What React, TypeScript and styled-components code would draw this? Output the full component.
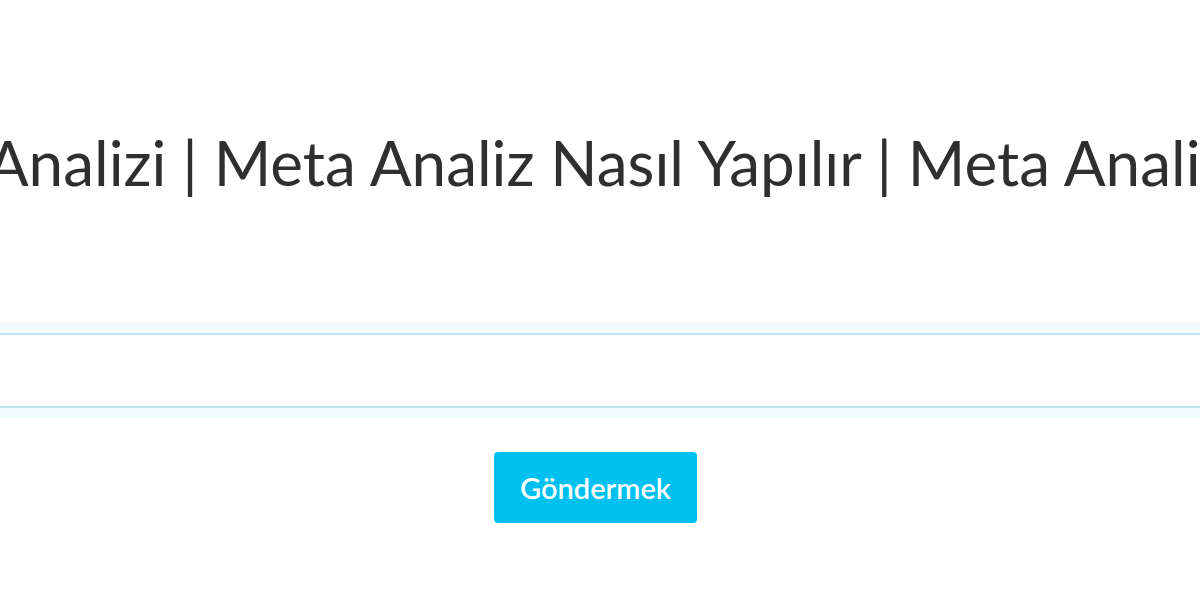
import React from "react";
import styled, { createGlobalStyle } from "styled-components";

const Global = createGlobalStyle`
  html, body { margin: 0; padding: 0; background: #ffffff; overflow: hidden; }
  body { font-family: "Lato", "Noto Sans", sans-serif; }
`;

const Page = styled.main`
  width: 1191px;
  height: 600px;
  display: flex;
  flex-direction: column;
  align-items: center;
  overflow: visible;
`;

const Title = styled.h1`
  margin: 0;
  padding-top: 114px;
  white-space: nowrap;
  font-family: "Lato", "Noto Sans", sans-serif;
  font-weight: 400;
  font-size: 62px;
  line-height: 96px;
  color: #2f2f2f;
`;

const Form = styled.form`
  margin-top: 123px;
  display: flex;
  flex-direction: column;
  align-items: center;
  width: 1300px;
`;

const Field = styled.input`
  box-sizing: border-box;
  width: 1300px;
  height: 75px;
  margin: 0;
  border: 2px solid #bde6f2;
  border-radius: 0;
  background: #ffffff;
  box-shadow: 0 0 0 10px #f0fbff;
  outline: none;
  font-family: inherit;
  font-size: 24px;
`;

const Submit = styled.button`
  margin-top: 44px;
  width: 203px;
  height: 71px;
  border: none;
  border-radius: 4px;
  background: #00c0ef;
  color: #ffffff;
  font-family: "Lato", "Noto Sans", sans-serif;
  font-weight: 600;
  font-size: 29px;
  cursor: pointer;
`;

export default function App() {
  return (
    <>
      <Global />
      <Page>
        <Title>Meta Analizi | Meta Analiz Nasıl Yapılır | Meta Analizi SSS</Title>
        <Form onSubmit={(e) => e.preventDefault()}>
          <Field type="text" aria-label="Arama" />
          <Submit type="submit">Göndermek</Submit>
        </Form>
      </Page>
    </>
  );
}
